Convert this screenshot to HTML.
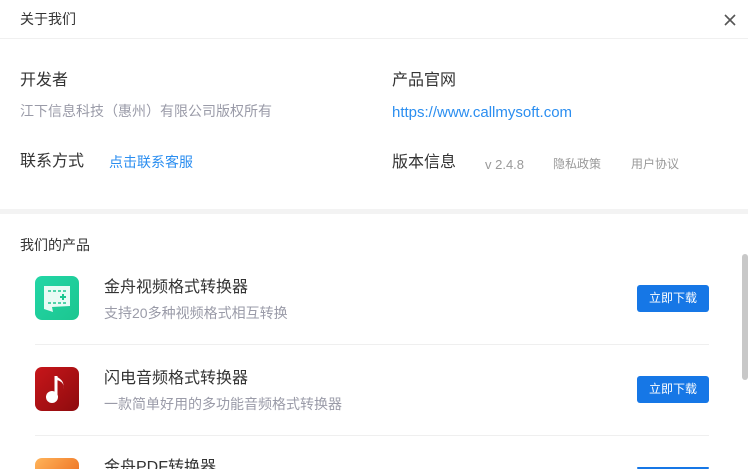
<!DOCTYPE html>
<html><head><meta charset="utf-8"><style>
*{margin:0;padding:0;box-sizing:border-box}
html,body{width:748px;height:469px;overflow:hidden;background:#fff}
body{font-family:"Liberation Sans","Noto Sans CJK SC",sans-serif;color:#333}
#w{position:relative;width:748px;height:469px;overflow:hidden}
.a{position:absolute;white-space:nowrap;line-height:1}
.btn{position:absolute;left:637px;width:72px;height:27px;background:#1677e6;color:#fff;border-radius:3px;font-size:12px;text-align:center;line-height:27px}
.ic{position:absolute;left:35px;width:44px;height:44px;border-radius:7px}
.hr{position:absolute;left:35px;width:674px;height:1px;background:#efefef}
</style></head><body><div id="w">
<div class="a" style="left:20px;top:12px;font-size:14px;color:#333">关于我们</div>
<svg style="position:absolute;left:723px;top:13px" width="14" height="14"><path d="M2 2L12 12M12 2L2 12" stroke="#555" stroke-width="1.6"/></svg>
<div style="position:absolute;left:0;top:38px;width:748px;height:1px;background:#f0f0f0"></div>

<div class="a" style="left:20px;top:73px;font-size:16px;color:#333">开发者</div>
<div class="a" style="left:20px;top:104px;font-size:14px;color:#9a9ba8">江下信息科技（惠州）有限公司版权所有</div>
<div class="a" style="left:20px;top:154px;font-size:16px;color:#333">联系方式</div>
<div class="a" style="left:109px;top:155px;font-size:14px;color:#2b8ef0">点击联系客服</div>

<div class="a" style="left:392px;top:73px;font-size:16px;color:#333">产品官网</div>
<div class="a" style="left:392px;top:105px;font-size:15px;color:#2b8ef0">https://www.callmysoft.com</div>
<div class="a" style="left:392px;top:155px;font-size:16px;color:#333">版本信息</div>
<div class="a" style="left:485px;top:158px;font-size:13px;color:#999">v 2.4.8</div>
<div class="a" style="left:553px;top:158px;font-size:12px;color:#999">隐私政策</div>
<div class="a" style="left:631px;top:158px;font-size:12px;color:#999">用户协议</div>

<div style="position:absolute;left:0;top:209px;width:748px;height:5px;background:#f3f3f3"></div>
<div class="a" style="left:20px;top:238px;font-size:14px;color:#333">我们的产品</div>

<div class="ic" style="top:276px;background:linear-gradient(135deg,#22d6a6,#1cc690)">
<svg width="44" height="44"><path d="M9 10L35 10L35 30L17 31L18 36L9 33Z" fill="#e8fbf5"/><path d="M13 15H32M13 27H32" stroke="#1cc690" stroke-width="1.5" stroke-dasharray="3 2"/><path d="M28 18V24M25 21H31" stroke="#1cc690" stroke-width="2"/></svg></div>
<div class="a" style="left:104px;top:280px;font-size:16px;color:#333">金舟视频格式转换器</div>
<div class="a" style="left:104px;top:306px;font-size:14px;color:#9a9ba8">支持20多种视频格式相互转换</div>
<div class="btn" style="top:285px">立即下载</div>
<div class="hr" style="top:344px"></div>

<div class="ic" style="top:367px;background:linear-gradient(135deg,#c7161a,#8e0b0e)">
<svg width="44" height="44"><path d="M21 9V29" stroke="#fff" stroke-width="3"/><path d="M21 9C25 12 30 14 28 22C30 16 25 14 22 13" fill="#fff"/><circle cx="17" cy="30" r="6" fill="#fff"/></svg></div>
<div class="a" style="left:104px;top:371px;font-size:16px;color:#333">闪电音频格式转换器</div>
<div class="a" style="left:104px;top:397px;font-size:14px;color:#9a9ba8">一款简单好用的多功能音频格式转换器</div>
<div class="btn" style="top:376px">立即下载</div>
<div class="hr" style="top:435px"></div>

<div class="ic" style="top:458px;height:11px;border-radius:7px 7px 0 0;background:linear-gradient(135deg,#ffb45a,#f07a2a)"></div>
<div style="position:absolute;left:104px;top:458px;height:11px;overflow:hidden"><div class="a" style="position:relative;top:2px;font-size:16px;color:#333">金舟PDF转换器</div></div>
<div class="btn" style="top:467px;height:2px"></div>

<div style="position:absolute;left:742px;top:254px;width:6px;height:126px;background:#c8c8c8;border-radius:3px"></div>
</div></body></html>
